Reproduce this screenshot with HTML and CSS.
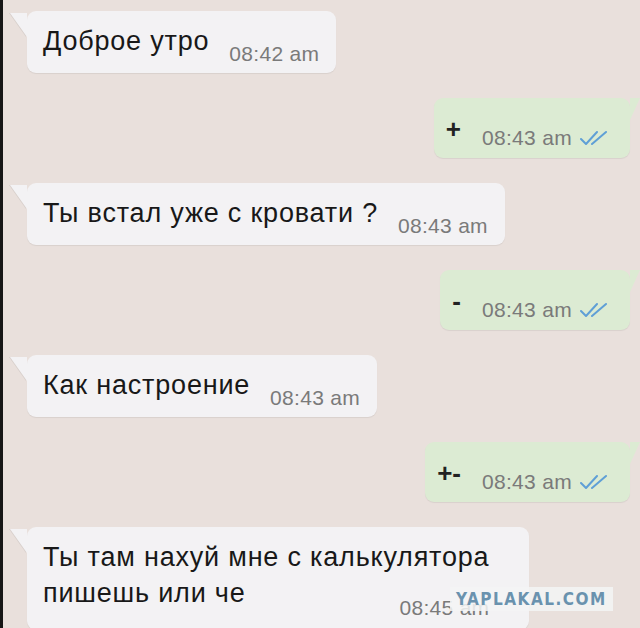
FILE: index.html
```html
<!DOCTYPE html>
<html lang="ru">
  <head>
    <meta charset="utf-8">
    <title>Чат</title>
    <link rel="stylesheet" href="styles.css">
  </head>
  <body>

    <main class="chat">
      <div class="row in">
        <div class="bubble">
          <span class="text">Доброе утро</span>
          <span class="time">08:42 am</span>
        </div>
      </div>

      <div class="row out">
        <div class="bubble">
          <span class="sign">+</span>
          <span class="time">08:43 am</span>
          <svg class="ticks" viewBox="0 0 30 16" width="30" height="16">
            <path d="M1 9 L6 14 L17 2 M12 14 L26 2" />
          </svg>
        </div>
      </div>

      <div class="row in">
        <div class="bubble">
          <span class="text">Ты встал уже с кровати ?</span>
          <span class="time">08:43 am</span>
        </div>
      </div>

      <div class="row out">
        <div class="bubble">
          <span class="sign">-</span>
          <span class="time">08:43 am</span>
          <svg class="ticks" viewBox="0 0 30 16" width="30" height="16">
            <path d="M1 9 L6 14 L17 2 M12 14 L26 2" />
          </svg>
        </div>
      </div>

      <div class="row in">
        <div class="bubble">
          <span class="text">Как настроение</span>
          <span class="time">08:43 am</span>
        </div>
      </div>

      <div class="row out">
        <div class="bubble">
          <span class="sign">+-</span>
          <span class="time">08:43 am</span>
          <svg class="ticks" viewBox="0 0 30 16" width="30" height="16">
            <path d="M1 9 L6 14 L17 2 M12 14 L26 2" />
          </svg>
        </div>
      </div>

      <div class="row in">
        <div class="bubble long">
          <span class="text">Ты там нахуй мне с калькулятора<br>пишешь или че</span>
          <span class="time">08:45 am</span>
        </div>
      </div>
    </main>

    <div class="watermark">YAPLAKAL.COM</div>

  </body>
</html>
```

FILE: styles.css
```css
* { box-sizing: border-box; }
html, body {
  margin: 0;
  height: 100%;
}
body {
  background-color: #e9e0dc;
  border-left: 3px solid #161616;
  font-family: 'Liberation Sans', Arial, sans-serif;
  overflow: hidden;
  position: relative;
}
.chat {
  display: flex;
  flex-direction: column;
  gap: 25px;
  padding: 11px 10px 0 24px;
}
.row {
  display: flex;
}
.row.out {
  justify-content: flex-end;
}
.bubble {
  position: relative;
  display: flex;
  align-items: flex-end;
  border-radius: 9px;
  box-shadow: 0 1px 1px rgba(0,0,0,0.07);
}
.in .bubble {
  background-color: #f3f2f4;
  padding: 16px 17px 7px 16px;
  gap: 20px;
  min-height: 62px;
}
.in .bubble::before {
  content: '';
  position: absolute;
  left: -17px;
  top: 2px;
  border-top: 24px solid #f3f2f4;
  border-left: 17px solid transparent;
  filter: drop-shadow(-1px 0 0 rgba(0,0,0,0.08));
}
.out .bubble {
  background-color: #dcebd3;
  padding: 0 20px 8px 12px;
  height: 60px;
}
.out .bubble::after {
  content: '';
  position: absolute;
  right: -10px;
  top: 0;
  border-top: 22px solid #dcebd3;
  border-right: 10px solid transparent;
}
.text {
  font-size: 27px;
  line-height: 28px;
  letter-spacing: 0.8px;
  color: #181818;
  margin-bottom: 11px;
  white-space: nowrap;
}
.time {
  font-size: 21px;
  line-height: 24px;
  letter-spacing: 0.3px;
  color: #7a7a7a;
}
.sign {
  font-size: 26px;
  line-height: 26px;
  font-weight: bold;
  color: #222;
  margin-right: 21px;
  margin-bottom: 8px;
}
.ticks {
  margin-left: 8px;
  margin-bottom: 4px;
  fill: none;
  stroke: #5f9fd6;
  stroke-width: 2;
  stroke-linecap: round;
  stroke-linejoin: round;
}
.bubble.long {
  flex-direction: column;
  align-items: stretch;
  padding: 12px 40px 10px 16px;
  gap: 0;
}
.long .text {
  line-height: 36px;
  margin-bottom: 0;
}
.long .time {
  align-self: flex-end;
  margin-top: -15px;
}
.watermark {
  position: absolute;
  left: 447px;
  top: 587px;
  padding: 2px 6px;
  background-color: rgba(243,244,245,0.85);
  font-family: 'DejaVu Sans Condensed', 'DejaVu Sans', sans-serif;
  font-weight: bold;
  font-size: 17px;
  letter-spacing: 1.5px;
  color: #6a92ae;
}
```
